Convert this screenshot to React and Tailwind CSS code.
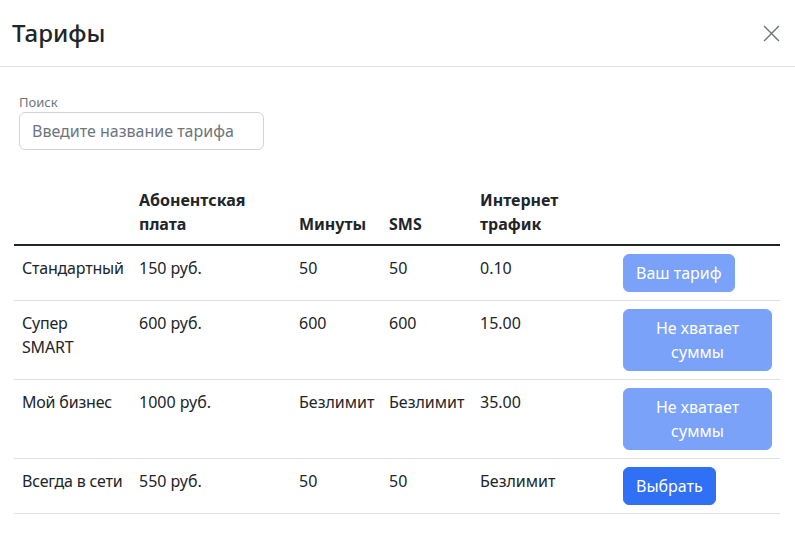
import React from 'react';

const tariffs = [
  { name: 'Стандартный', price: '150 руб.', minutes: '50', sms: '50', net: '0.10', action: 'current' },
  { name: 'Супер\nSMART', price: '600 руб.', minutes: '600', sms: '600', net: '15.00', action: 'short' },
  { name: 'Мой бизнес', price: '1000 руб.', minutes: 'Безлимит', sms: 'Безлимит', net: '35.00', action: 'short' },
  { name: 'Всегда в сети', price: '550 руб.', minutes: '50', sms: '50', net: 'Безлимит', action: 'pick' },
];

const ActionButton = ({ action }) => {
  if (action === 'current') {
    return (
      <button disabled className="px-3 py-1.5 rounded-md border border-[#7ba2f9] bg-[#7ba2f9] text-white text-base leading-6">
        Ваш тариф
      </button>
    );
  }
  if (action === 'short') {
    return (
      <button disabled className="w-[149px] px-3 py-1.5 rounded-md border border-[#7ba2f9] bg-[#7ba2f9] text-white text-base leading-6 text-center">
        Не хватает суммы
      </button>
    );
  }
  return (
    <button className="px-3 py-1.5 rounded-md border border-[#3070f5] bg-[#3070f5] text-white text-base leading-6">
      Выбрать
    </button>
  );
};

export default function App() {
  return (
    <div className="w-[795px] h-[545px] bg-white text-[#212529] font-['Noto_Sans',sans-serif]">
      {/* Header */}
      <div className="flex items-center justify-between h-[67px] px-3 border-b border-[#dee2e6]">
        <h1 className="text-[24px] font-medium leading-none">Тарифы</h1>
        <button className="w-[17px] h-[17px] mr-[3px] text-[#6c757d]" aria-label="Закрыть">
          <svg viewBox="0 0 16 16" className="w-full h-full" fill="none" stroke="currentColor" strokeWidth="1.3">
            <path d="M1 1L15 15M15 1L1 15" />
          </svg>
        </button>
      </div>

      {/* Body */}
      <div className="px-[14px] pt-[25px]">
        <div className="pl-[5px]">
          <label className="block text-[13px] leading-5 text-[#6c757d]">Поиск</label>
          <input
            type="text"
            placeholder="Введите название тарифа"
            className="w-[245px] h-[38px] px-3 border border-[#ced4da] rounded-md text-base placeholder:text-[#6c757d] outline-none"
          />
        </div>

        <table className="mt-[30px] w-[766px] table-fixed border-collapse text-base leading-6">
          <thead>
            <tr className="border-b-2 border-[#212529] text-left align-bottom">
              <th className="w-[117px] p-2 font-bold"></th>
              <th className="w-[160px] p-2 font-bold">Абонентская<br />плата</th>
              <th className="w-[90px] p-2 font-bold">Минуты</th>
              <th className="w-[91px] p-2 font-bold">SMS</th>
              <th className="w-[143px] p-2 font-bold">Интернет<br />трафик</th>
              <th className="p-2 font-bold"></th>
            </tr>
          </thead>
          <tbody>
            {tariffs.map((t) => (
              <tr key={t.name} className="border-b border-[#dee2e6] align-top">
                <td className="p-2 pt-[10px] whitespace-pre-line tracking-[-0.2px]">{t.name}</td>
                <td className="p-2 pt-[10px]">{t.price}</td>
                <td className="p-2 pt-[10px]">{t.minutes}</td>
                <td className="p-2 pt-[10px]">{t.sms}</td>
                <td className="p-2 pt-[10px]">{t.net}</td>
                <td className="p-2">
                  <ActionButton action={t.action} />
                </td>
              </tr>
            ))}
          </tbody>
        </table>
      </div>
    </div>
  );
}
